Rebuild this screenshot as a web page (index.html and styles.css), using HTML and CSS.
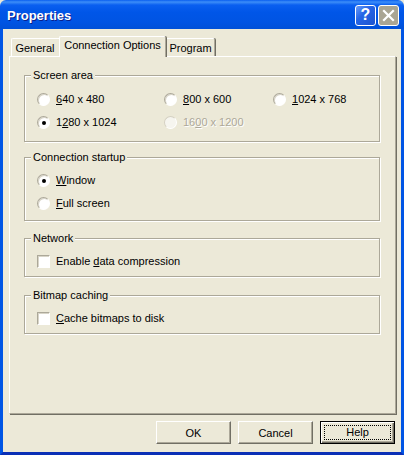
FILE: index.html
```html
<!DOCTYPE html>
<html lang="en">
<head>
    <meta charset="UTF-8">
    <title>Properties</title>
    <link rel="stylesheet" href="styles.css">
</head>
<body>
    <div class="window">
        <div class="titlebar">
            <span class="title">Properties</span>
            <div class="caption-buttons">
                <span class="cap-btn help">?</span>
                <span class="cap-btn close">
                    <svg width="13" height="13" viewBox="0 0 13 13">
                        <path d="M2 2 L11 11 M11 2 L2 11" stroke="#fff" stroke-width="2.2" stroke-linecap="square"/>
                    </svg>
                </span>
            </div>
        </div>

        <div class="client">
            <div class="tabs">
                <div class="tab tab-general">General</div>
                <div class="tab tab-active">Connection Options</div>
                <div class="tab tab-program">Program</div>
            </div>

            <div class="panel">
                <div class="group group-screen">
                    <span class="group-title">Screen area</span>
                    <div class="res-grid">
                        <label class="option"><span class="radio"></span><span><u>6</u>40 x 480</span></label>
                        <label class="option"><span class="radio"></span><span><u>8</u>00 x 600</span></label>
                        <label class="option"><span class="radio"></span><span><u>1</u>024 x 768</span></label>
                        <label class="option"><span class="radio checked"></span><span>1<u>2</u>80 x 1024</span></label>
                        <label class="option disabled"><span class="radio"></span><span>16<u>0</u>0 x 1200</span></label>
                    </div>
                </div>

                <div class="group group-startup">
                    <span class="group-title">Connection startup</span>
                    <div class="stack">
                        <label class="option"><span class="radio checked"></span><span><u>W</u>indow</span></label>
                        <label class="option"><span class="radio"></span><span><u>F</u>ull screen</span></label>
                    </div>
                </div>

                <div class="group group-network">
                    <span class="group-title">Network</span>
                    <label class="option"><span class="checkbox"></span><span>Enable <u>d</u>ata compression</span></label>
                </div>

                <div class="group group-bitmap">
                    <span class="group-title">Bitmap caching</span>
                    <label class="option"><span class="checkbox"></span><span><u>C</u>ache bitmaps to disk</span></label>
                </div>
            </div>

            <div class="buttons">
                <button class="btn">OK</button>
                <button class="btn">Cancel</button>
                <button class="btn btn-default"><span class="focus">Help</span></button>
            </div>
        </div>
    </div>
</body>
</html>
```

FILE: styles.css
```css
body {
    margin: 0;
    background: #ece9d8;
    font-family: "Liberation Sans", Arial, sans-serif;
    font-size: 11px;
    color: #000;
}
.window {
    width: 404px;
    height: 455px;
    display: flex;
    flex-direction: column;
}

/* title bar */
.titlebar {
    height: 29px;
    flex: none;
    display: flex;
    align-items: center;
    justify-content: space-between;
    padding: 0 5px 0 7px;
    background: linear-gradient(#0a5fef 0, #3d8ef8 2px, #0a5ff0 5px, #0056e8 12px, #0054e3 22px, #0050d8 29px);
    border-radius: 6px 6px 0 0;
}
.title {
    color: #fff;
    font-weight: bold;
    font-size: 13px;
    text-shadow: 1px 1px #0a1f8c;
    margin-top: 1px;
}
.caption-buttons {
    display: flex;
    gap: 2px;
    margin-top: 1px;
}
.cap-btn {
    width: 21px;
    height: 21px;
    box-sizing: border-box;
    border: 1px solid #fff;
    border-radius: 3px;
    display: flex;
    align-items: center;
    justify-content: center;
}
.help {
    background: linear-gradient(135deg, #6a9bf8, #2565e6 40%, #1c54cf);
    color: #fff;
    font-weight: bold;
    font-size: 16px;
}
.close {
    background: #aaa593;
}

/* client area */
.client {
    flex: 1;
    border: 3px solid #0055e5;
    border-top: none;
    border-bottom-color: #0a2fb6;
    background: #ece9d8;
}
.tabs {
    height: 27px;
    display: flex;
    align-items: flex-end;
    padding-left: 8px;
}
.tab {
    height: 18px;
    line-height: 18px;
    box-sizing: border-box;
    text-align: center;
    border-top: 1px solid #fff;
    border-left: 1px solid #fff;
    border-right: 1px solid #aca899;
    box-shadow: 1px 0 #716f64;
    border-radius: 2px 2px 0 0;
    background: #ece9d8;
}
.tab-general {
    width: 50px;
    padding-right: 2px;
}
.tab-program {
    width: 51px;
    padding-left: 2px;
}
.tab-active {
    position: relative;
    z-index: 1;
    width: 107px;
    height: 21px;
    line-height: 16px;
    margin: 0 -2px -1px;
}

.panel {
    height: 358px;
    width: 387px;
    margin-left: 6px;
    box-sizing: border-box;
    border: 1px solid #fff;
    border-right-color: #aca899;
    border-bottom-color: #aca899;
    box-shadow: 1px 1px #716f64;
    padding: 18px 15px 0 14px;
}

/* group boxes */
.group {
    position: relative;
    border: 1px solid #aca899;
    box-shadow: inset 1px 1px #fff, 1px 1px #fff;
    padding: 14px 10px 6px 12px;
}
.group-title {
    position: absolute;
    top: -7px;
    left: 6px;
    padding: 0 2px;
    line-height: 13px;
    background: #ece9d8;
}
.group-screen {
    padding-top: 15px;
    padding-bottom: 10px;
}
.group-startup {
    margin-top: 15px;
    padding-bottom: 8px;
}
.group-network {
    margin-top: 17px;
}
.group-bitmap {
    margin-top: 18px;
}
.res-grid {
    display: grid;
    grid-template-columns: 127px 109px auto;
    row-gap: 6px;
}
.stack {
    display: flex;
    flex-direction: column;
    gap: 6px;
}
.option {
    display: flex;
    align-items: center;
    gap: 6px;
    height: 17px;
    line-height: 13px;
}
.option.disabled {
    color: #aca899;
    text-shadow: 1px 1px #fff;
}

.radio {
    width: 13px;
    height: 13px;
    box-sizing: border-box;
    border-radius: 50%;
    border: 1px solid;
    border-color: #aca899 #fff #fff #aca899;
    background: #fff;
    box-shadow: inset 1px 1px #d8d5c8;
    position: relative;
    flex: none;
}
.disabled .radio {
    border-color: #d4d0c2 #fff #fff #d4d0c2;
    background: #f6f5ef;
    box-shadow: none;
}
.radio.checked::after {
    content: "";
    position: absolute;
    left: 4px;
    top: 4px;
    width: 4px;
    height: 4px;
    border-radius: 50%;
    background: #000;
}
.checkbox {
    width: 13px;
    height: 13px;
    box-sizing: border-box;
    border: 1px solid;
    border-color: #aca899 #fff #fff #aca899;
    background: #fff;
    box-shadow: inset 1px 1px #d8d5c8;
    flex: none;
}

/* dialog buttons */
.buttons {
    display: flex;
    justify-content: flex-end;
    gap: 7px;
    margin: 7px 6px 0 0;
}
.btn {
    width: 75px;
    height: 23px;
    box-sizing: border-box;
    font-family: inherit;
    font-size: 11px;
    color: #000;
    background: #ece9d8;
    border: 1px solid;
    border-color: #fff #716f64 #716f64 #fff;
    box-shadow: inset -1px -1px #aca899;
    padding: 0;
}
.btn-default {
    border: 1px solid #000;
    box-shadow: inset 1px 1px #fff, inset -1px -1px #716f64, inset -2px -2px #aca899;
    padding: 3px;
}
.focus {
    display: block;
    height: 15px;
    line-height: 13px;
    border: 1px dotted #000;
    box-sizing: border-box;
}
```
